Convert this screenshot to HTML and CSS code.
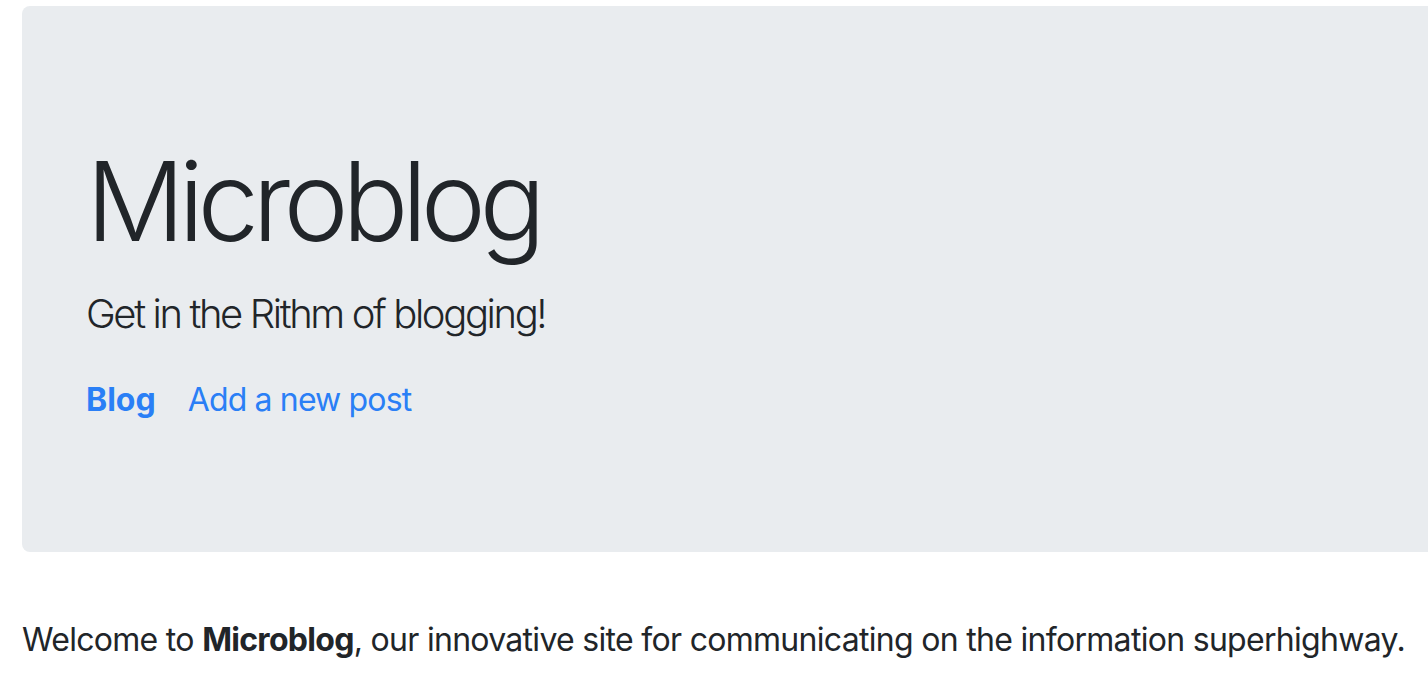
FILE: index.html
```html
<!DOCTYPE html>
<html lang="en">
<head>
<meta charset="utf-8">
<title>Microblog</title>
<link rel="stylesheet" href="styles.css">
</head>
<body>
<div class="page">
  <header class="jumbotron">
    <h1 class="title">Microblog</h1>
    <p class="lead">Get in the Rithm of blogging!</p>
    <nav class="nav">
      <a class="nav-link active" href="#">Blog</a>
      <a class="nav-link" href="#">Add a new post</a>
    </nav>
  </header>
  <main>
    <p class="welcome">Welcome to <b>Microblog</b>, our innovative site for communicating on the information superhighway.</p>
  </main>
</div>
</body>
</html>
```
FILE: styles.css
```css
html, body {
  margin: 0;
  padding: 0;
  background: #fff;
  overflow: hidden;
}
body {
  font-family: Inter, "Liberation Sans", sans-serif;
  color: #212529;
  font-size: 32px;
  line-height: 1.5;
}
.page {
  width: 1460px;
  padding: 6px 0 0 22px;
}
.jumbotron {
  background: #e9ecef;
  border-radius: 8px;
  padding: 128px 64px;
  margin-bottom: 64px;
}
.title {
  margin: 0 0 16px;
  font-size: 110px;
  font-weight: 300;
  line-height: 1.22;
  letter-spacing: -6.6px;
}
.lead {
  margin: 0 0 32px;
  font-size: 40px;
  font-weight: 300;
  line-height: 1.5;
  letter-spacing: -2.4px;
}
.nav {
  display: flex;
  gap: 32px;
}
.nav-link {
  color: #2a7ff6;
  text-decoration: none;
  letter-spacing: -0.85px;
}
.nav-link.active {
  font-weight: 700;
  letter-spacing: 0;
}
.welcome {
  margin: 0;
  letter-spacing: -0.7px;
}
.welcome b {
  font-weight: 700;
}
```
